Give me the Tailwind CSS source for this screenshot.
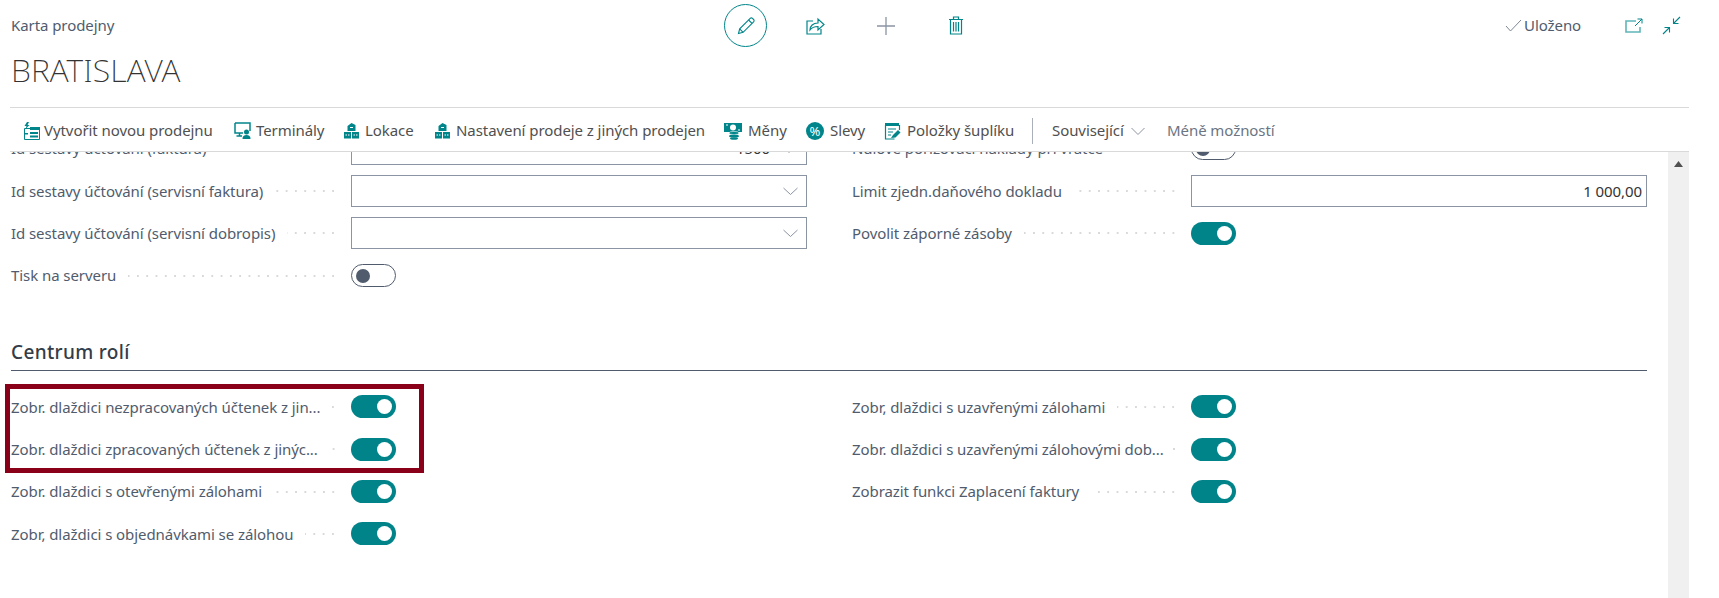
<!DOCTYPE html>
<html lang="cs">
<head>
<meta charset="utf-8">
<script src="https://cdn.jsdelivr.net/npm/@tailwindcss/browser@4"></script>
<title>Karta prodejny</title>
</head>
<body class="bg-white">
<div class="relative w-[1719px] h-[598px] overflow-hidden bg-white font-['Noto_Sans',sans-serif] text-[15px] tracking-[-0.07px] text-[#505c6d]">

  <header class="ml-[10px] w-[1679px] h-[108px] border-b border-[#d9d9d9] flex flex-col">
    <div class="flex items-center h-[51px] pl-[1px]">
      <div class="w-[713px] text-[#505c6d]">Karta prodejny</div>
      <button class="w-[43px] h-[43px] rounded-full border border-[#00858a] flex items-center justify-center shrink-0">
        <svg width="20" height="20" viewBox="0 0 20 20" fill="none" stroke="#00858a" stroke-width="1.100"><path d="M2.500 17.500l1.200-4.600L14.200 2.400a1.600 1.600 0 0 1 2.300 0l1.100 1.100a1.600 1.600 0 0 1 0 2.300L7.100 16.300z"/><path d="M3.700 12.900l3.400 3.400M12.600 4l3.400 3.400"/></svg>
      </button>
      <svg class="ml-[39px]" width="19" height="18" viewBox="0 0 19 18" fill="none" stroke="#00858a" stroke-width="1.200"><path d="M7 4H1v13h14v-5"/><path d="M4 13c0-4 3-7 8-7V2l6 5.500-6 5.500V9.500c-3 0-6 .8-8 3.500z"/></svg>
      <svg class="ml-[51px]" width="20" height="20" viewBox="0 0 20 20" fill="none" stroke="#8a94a2" stroke-width="1.300"><path d="M10 1v18M1 10h18"/></svg>
      <svg class="ml-[52px]" width="16" height="19" viewBox="0 0 16 19" fill="none" stroke="#00858a" stroke-width="1.200"><path d="M1 3.500h14M5.500 3.500V1h5v2.500M2.500 3.500V18h11V3.500M5.500 6v9.500M8 6v9.500M10.500 6v9.500"/></svg>
      <svg class="ml-[541px]" width="17" height="13" viewBox="0 0 17 13" fill="none" stroke="#7d8794" stroke-width="1"><path d="M1 7l4.500 5L16 1"/></svg>
      <span class="ml-[2px] w-[101px]">Uloženo</span>
      <svg width="18" height="16" viewBox="0 0 18 16" fill="none"><path d="M11 3H1v11h14V9" stroke="#5fb5b8" stroke-width="1.600"/><path d="M10 8l7-7M12.500 1H17v4.500" stroke="#00858a" stroke-width="1"/></svg>
      <svg class="ml-[19px]" width="19" height="19" viewBox="0 0 19 19" fill="none" stroke="#00858a" stroke-width="1.100"><path d="M18 1l-6.500 6.500M11.500 2.500v5h5M1 18l6.500-6.500M2.500 11.500h5v5"/></svg>
    </div>
    <h1 class="pl-[1px] -mt-[1px] text-[32px] leading-[40px] font-extralight tracking-[0.12px] text-[#333]">BRATISLAVA</h1>
  </header>

  <nav class="ml-[10px] w-[1679px] h-[44px] border-b border-[#d9d9d9] flex items-center pt-[2px] pl-[13px] text-[#505050] whitespace-nowrap">
    <div class="w-[211px] flex items-center gap-[4px]">
      <svg width="17" height="18" viewBox="0 0 17 18"><path d="M4 0L1.500 4h2L2.500 7 6.500 3H4.500L6 0z" fill="#00858a"/><path d="M1.500 6.500h15v11h-15z" fill="none" stroke="#00858a" stroke-width="1"/><path d="M7 5h10v3H7zM2 11h3v1.500H2zM7 10h8v2H7zM7 13.500h8v2H7z" fill="#00858a"/></svg>
      <span>Vytvořit novou prodejnu</span>
    </div>
    <div class="w-[110px] flex items-center gap-[5px]">
      <svg width="17" height="17" viewBox="0 0 17 17"><path d="M1 1h15v8M9 11H1V1M5.500 11v2.500M2.500 14H8" fill="none" stroke="#00858a" stroke-width="1.500"/><circle cx="12.500" cy="10" r="2.500" fill="#00858a"/><path d="M8.500 17c0-3 1.500-4 4-4s4 1 4 4z" fill="#00858a"/></svg>
      <span>Terminály</span>
    </div>
    <div class="w-[91px] flex items-center gap-[6px]">
      <svg width="15" height="16" viewBox="0 0 15 16"><path d="M3.500 8V3L7.500 0l4 2v6zM0 9h7v6.500H0zM8 9h7v6.500H8z" fill="#00858a"/><path d="M1.500 12h1.500M4 12h1.500M9.500 12H11M12 12h1.500M6 4.500h3" stroke="#fff" stroke-width="1.200"/></svg>
      <span>Lokace</span>
    </div>
    <div class="w-[289px] flex items-center gap-[6px]">
      <svg width="15" height="16" viewBox="0 0 15 16"><path d="M3.500 8V3L7.500 0l4 2v6zM0 9h7v6.500H0zM8 9h7v6.500H8z" fill="#00858a"/><path d="M1.500 12h1.500M4 12h1.500M9.500 12H11M12 12h1.500M6 4.500h3" stroke="#fff" stroke-width="1.200"/></svg>
      <span>Nastavení prodeje z jiných prodejen</span>
    </div>
    <div class="w-[82px] flex items-center gap-[6px]">
      <svg width="18" height="18" viewBox="0 0 18 18"><path d="M0 1h18v9H0z" fill="#00858a"/><circle cx="9" cy="5.500" r="3" fill="#fff"/><path d="M2 3h2M14 8h2" stroke="#fff"/><ellipse cx="10" cy="11" rx="5" ry="1.600" fill="#00858a" stroke="#fff" stroke-width=".6"/><ellipse cx="10" cy="14" rx="5" ry="1.600" fill="#00858a"/><ellipse cx="10" cy="16.500" rx="4" ry="1.300" fill="#00858a"/></svg>
      <span>Měny</span>
    </div>
    <div class="w-[78px] flex items-center gap-[6px]">
      <div class="w-[18px] h-[18px] rounded-full bg-[#00858a] text-white text-[13px] leading-[18px] text-center tracking-normal">%</div>
      <span>Slevy</span>
    </div>
    <div class="w-[148px] flex items-center gap-[6px]">
      <svg width="17" height="18" viewBox="0 0 17 18" fill="none"><path d="M1 1h14v3H1z" fill="#00858a"/><path d="M1.500 3v14h9M15.500 3v5" stroke="#00858a" stroke-width="1.200"/><path d="M4 7h8M4 10h5M4 13h3" stroke="#00858a"/><path d="M7 16l2-3 5-5 2.500 2.500-5 5z" fill="#00858a"/></svg>
      <span>Položky šuplíku</span>
    </div>
    <div class="w-px h-[26px] bg-[#a9b0b9] mr-[19px]"></div>
    <span class="w-[79px]">Související</span>
    <svg width="14" height="8" viewBox="0 0 14 8" fill="none" stroke="#8a94a2"><path d="M.5 1l6.500 6.500L13.500 1"/></svg>
    <span class="ml-[22px] text-[#6b7583]">Méně možností</span>
  </nav>

  <div class="ml-[10px] w-[1679px] flex h-[446px]">
    <main class="flex-1 overflow-hidden pl-[1px]">
      <div class="-mt-[24.5px] grid grid-cols-[796px_795px] gap-x-[45px]">
        <div class="flex flex-col">
          <div class="flex items-center h-[42.33px]"><span class="whitespace-nowrap">Id sestavy účtování (faktura)</span><i class="flex-1"></i>
            <div class="w-[456px] h-[32px] border border-[#8a94a2] flex items-center justify-end pr-[10px] text-[#333]">1500<svg class="ml-[12px]" width="14" height="8" viewBox="0 0 14 8" fill="none" stroke="#8a94a2"><path d="M.5 1l6.500 6.500L13.500 1"/></svg></div>
          </div>
          <div class="flex items-center h-[42.33px]"><span class="whitespace-nowrap">Id sestavy účtování (servisní faktura)</span><i class="flex-1 h-[2px] ml-[12px] mr-[13px] bg-[radial-gradient(circle,#d9d9d9_1px,transparent_1.2px)] bg-[length:9.300px_2px] bg-right"></i>
            <div class="w-[456px] h-[32px] border border-[#8a94a2] flex items-center justify-end pr-[8px]"><svg width="15" height="8" viewBox="0 0 15 8" fill="none" stroke="#8a94a2"><path d="M.5 1l7 6.500 7-6.500"/></svg></div>
          </div>
          <div class="flex items-center h-[42.33px]"><span class="whitespace-nowrap">Id sestavy účtování (servisní dobropis)</span><i class="flex-1 h-[2px] ml-[12px] mr-[13px] bg-[radial-gradient(circle,#d9d9d9_1px,transparent_1.2px)] bg-[length:9.300px_2px] bg-right"></i>
            <div class="w-[456px] h-[32px] border border-[#8a94a2] flex items-center justify-end pr-[8px]"><svg width="15" height="8" viewBox="0 0 15 8" fill="none" stroke="#8a94a2"><path d="M.5 1l7 6.500 7-6.500"/></svg></div>
          </div>
          <div class="flex items-center h-[42.33px]"><span class="whitespace-nowrap">Tisk na serveru</span><i class="flex-1 h-[2px] ml-[12px] mr-[13px] bg-[radial-gradient(circle,#d9d9d9_1px,transparent_1.2px)] bg-[length:9.300px_2px] bg-right"></i>
            <div class="w-[45px] h-[23px] rounded-full border border-[#505c6d] flex items-center pl-[4px] mr-[411px]"><b class="w-[14px] h-[14px] rounded-full bg-[#505c6d]"></b></div>
          </div>
        </div>
        <div class="flex flex-col">
          <div class="flex items-center h-[42.33px]"><span class="whitespace-nowrap">Nulové pořizovací náklady při vrátce</span><i class="flex-1"></i>
            <div class="w-[45px] h-[23px] rounded-full border border-[#505c6d] flex items-center pl-[4px] mr-[411px]"><b class="w-[14px] h-[14px] rounded-full bg-[#505c6d]"></b></div>
          </div>
          <div class="flex items-center h-[42.33px]"><span class="whitespace-nowrap">Limit zjedn.daňového dokladu</span><i class="flex-1 h-[2px] ml-[12px] mr-[13px] bg-[radial-gradient(circle,#d9d9d9_1px,transparent_1.2px)] bg-[length:9.300px_2px] bg-right"></i>
            <div class="w-[456px] h-[32px] border border-[#8a94a2] flex items-center justify-end pr-[4px] text-[#333]">1 000,00</div>
          </div>
          <div class="flex items-center h-[42.33px]"><span class="whitespace-nowrap">Povolit záporné zásoby</span><i class="flex-1 h-[2px] ml-[12px] mr-[13px] bg-[radial-gradient(circle,#d9d9d9_1px,transparent_1.2px)] bg-[length:9.300px_2px] bg-right"></i>
            <div class="w-[45px] h-[23px] rounded-full bg-[#00848a] flex items-center justify-end pr-[4px] mr-[411px]"><b class="w-[15px] h-[15px] rounded-full bg-white"></b></div>
          </div>
        </div>

        <h2 class="col-span-2 mt-[44px] mb-[15px] h-[30px] border-b border-[#505c6d] text-[19px] leading-[22px] font-medium tracking-[0.35px] text-[#333c48]">Centrum rolí</h2>

        <div class="flex flex-col">
          <div class="flex items-center h-[42.33px]"><span class="whitespace-nowrap">Zobr. dlaždici nezpracovaných účtenek z jin...</span><i class="flex-1 h-[2px] ml-[8px] mr-[13px] bg-[radial-gradient(circle,#d9d9d9_1px,transparent_1.2px)] bg-[length:9.300px_2px] bg-right"></i>
            <div class="w-[45px] h-[23px] rounded-full bg-[#00848a] flex items-center justify-end pr-[4px] mr-[411px]"><b class="w-[15px] h-[15px] rounded-full bg-white"></b></div>
          </div>
          <div class="flex items-center h-[42.33px]"><span class="whitespace-nowrap">Zobr. dlaždici zpracovaných účtenek z jinýc...</span><i class="flex-1 h-[2px] ml-[8px] mr-[13px] bg-[radial-gradient(circle,#d9d9d9_1px,transparent_1.2px)] bg-[length:9.300px_2px] bg-right"></i>
            <div class="w-[45px] h-[23px] rounded-full bg-[#00848a] flex items-center justify-end pr-[4px] mr-[411px]"><b class="w-[15px] h-[15px] rounded-full bg-white"></b></div>
          </div>
          <div class="flex items-center h-[42.33px]"><span class="whitespace-nowrap">Zobr. dlaždici s otevřenými zálohami</span><i class="flex-1 h-[2px] ml-[12px] mr-[13px] bg-[radial-gradient(circle,#d9d9d9_1px,transparent_1.2px)] bg-[length:9.300px_2px] bg-right"></i>
            <div class="w-[45px] h-[23px] rounded-full bg-[#00848a] flex items-center justify-end pr-[4px] mr-[411px]"><b class="w-[15px] h-[15px] rounded-full bg-white"></b></div>
          </div>
          <div class="flex items-center h-[42.33px]"><span class="whitespace-nowrap">Zobr, dlaždici s objednávkami se zálohou</span><i class="flex-1 h-[2px] ml-[12px] mr-[13px] bg-[radial-gradient(circle,#d9d9d9_1px,transparent_1.2px)] bg-[length:9.300px_2px] bg-right"></i>
            <div class="w-[45px] h-[23px] rounded-full bg-[#00848a] flex items-center justify-end pr-[4px] mr-[411px]"><b class="w-[15px] h-[15px] rounded-full bg-white"></b></div>
          </div>
        </div>
        <div class="flex flex-col">
          <div class="flex items-center h-[42.33px]"><span class="whitespace-nowrap">Zobr, dlaždici s uzavřenými zálohami</span><i class="flex-1 h-[2px] ml-[12px] mr-[13px] bg-[radial-gradient(circle,#d9d9d9_1px,transparent_1.2px)] bg-[length:9.300px_2px] bg-right"></i>
            <div class="w-[45px] h-[23px] rounded-full bg-[#00848a] flex items-center justify-end pr-[4px] mr-[411px]"><b class="w-[15px] h-[15px] rounded-full bg-white"></b></div>
          </div>
          <div class="flex items-center h-[42.33px]"><span class="whitespace-nowrap">Zobr. dlaždici s uzavřenými zálohovými dob...</span><i class="flex-1 h-[2px] ml-[8px] mr-[13px] bg-[radial-gradient(circle,#d9d9d9_1px,transparent_1.2px)] bg-[length:9.300px_2px] bg-right"></i>
            <div class="w-[45px] h-[23px] rounded-full bg-[#00848a] flex items-center justify-end pr-[4px] mr-[411px]"><b class="w-[15px] h-[15px] rounded-full bg-white"></b></div>
          </div>
          <div class="flex items-center h-[42.33px]"><span class="whitespace-nowrap">Zobrazit funkci Zaplacení faktury</span><i class="flex-1 h-[2px] ml-[12px] mr-[13px] bg-[radial-gradient(circle,#d9d9d9_1px,transparent_1.2px)] bg-[length:9.300px_2px] bg-right"></i>
            <div class="w-[45px] h-[23px] rounded-full bg-[#00848a] flex items-center justify-end pr-[4px] mr-[411px]"><b class="w-[15px] h-[15px] rounded-full bg-white"></b></div>
          </div>
        </div>
      </div>
    </main>
    <aside class="w-[21px] bg-[#f0f0f0] flex justify-center pt-[9px]">
      <svg width="9" height="6" viewBox="0 0 9 6"><path d="M4.500 0L9 6H0z" fill="#505050"/></svg>
    </aside>
  </div>

  <div class="absolute left-[5px] top-[384px] w-[419px] h-[89px] border-[5px] border-[#8b0019]"></div>
</div>
</body>
</html>
